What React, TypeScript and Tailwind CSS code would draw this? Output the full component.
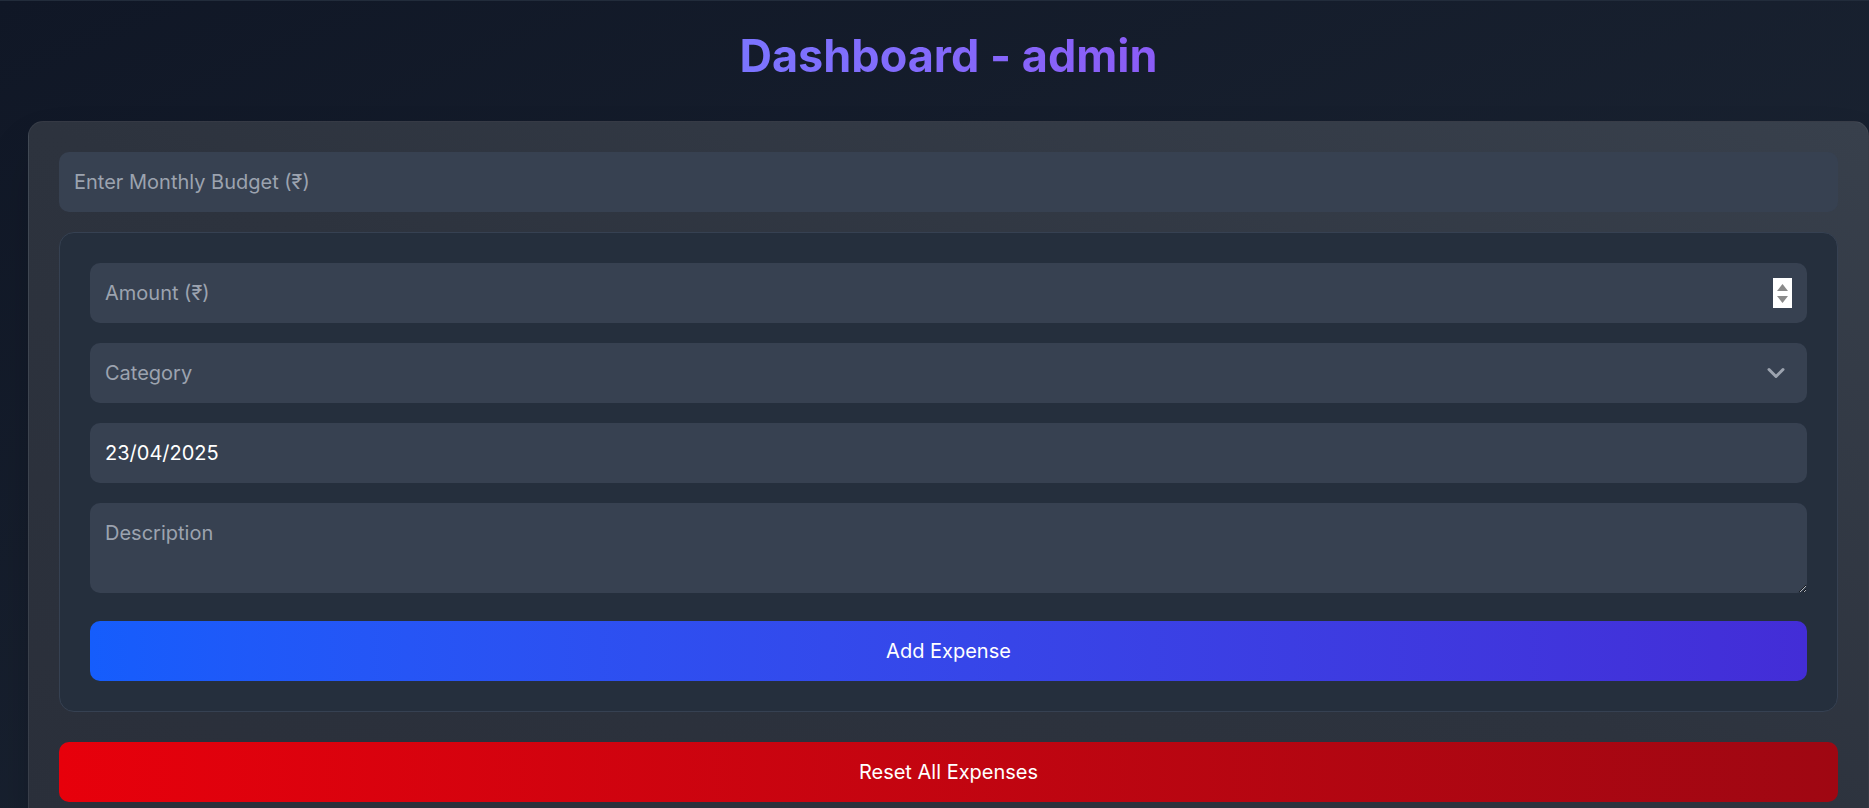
import React, { useState } from 'react';

const inputClass =
  'w-full h-[60px] rounded-[10px] bg-[#374151] px-[15px] text-[20px] placeholder-[#9ca3af] outline-none';

const SpinButton = () => (
  <div className="absolute right-[15px] top-1/2 -translate-y-1/2 flex h-[30px] w-[19px] flex-col items-center justify-center gap-[5px] bg-white">
    <svg width="11" height="7" viewBox="0 0 11 7">
      <path d="M5.5 0 L11 7 L0 7 Z" fill="#8a8a8a" />
    </svg>
    <svg width="11" height="7" viewBox="0 0 11 7">
      <path d="M0 0 L11 0 L5.5 7 Z" fill="#8a8a8a" />
    </svg>
  </div>
);

const Chevron = () => (
  <svg
    className="pointer-events-none absolute right-[22px] top-1/2 -translate-y-1/2"
    width="18"
    height="11"
    viewBox="0 0 18 11"
    fill="none"
  >
    <path d="M2 2 L9 9 L16 2" stroke="#9ca3af" strokeWidth="3" strokeLinecap="round" strokeLinejoin="round" />
  </svg>
);

export default function App() {
  const [budget, setBudget] = useState('');
  const [amount, setAmount] = useState('');
  const [category, setCategory] = useState('');
  const [date, setDate] = useState('23/04/2025');
  const [description, setDescription] = useState('');

  return (
    <div
      className="min-h-screen overflow-hidden border-t border-[#222c3b] bg-gradient-to-br from-[#101726] to-[#1f2937] pt-[30px]"
      style={{ fontFamily: 'Inter, "Noto Sans", sans-serif' }}
    >
      {/* page is a bit wider than the window, like the original */}
      <div className="w-[1897px]">
        <h1 className="mb-[40px] text-center text-[45px] leading-[50px] font-bold">
          <span className="bg-gradient-to-r from-[#7b74ff] to-[#8b5cf6] bg-clip-text text-transparent">
            Dashboard - admin
          </span>
        </h1>

        <div className="mx-[28px] rounded-[15px] border border-white/5 bg-gradient-to-bl from-[#38404c] via-[#2d333e] to-[#2a2f3a] p-[30px] shadow-2xl">
          {/* budget */}
          <input
            type="text"
            value={budget}
            onChange={(e) => setBudget(e.target.value)}
            placeholder="Enter Monthly Budget (₹)"
            className={`${inputClass} text-white`}
          />

          {/* expense form */}
          <form className="mt-[20px] flex flex-col gap-[20px] rounded-[15px] border border-[#364152] bg-[#252f3d] p-[30px]">
            <div className="relative">
              <input
                type="text"
                value={amount}
                onChange={(e) => setAmount(e.target.value)}
                placeholder="Amount (₹)"
                className={`${inputClass} text-white`}
              />
              <SpinButton />
            </div>

            <div className="relative">
              <select
                value={category}
                onChange={(e) => setCategory(e.target.value)}
                className={`${inputClass} appearance-none ${category ? 'text-white' : 'text-[#9ca3af]'}`}
              >
                <option value="">Category</option>
                <option value="food">Food</option>
                <option value="travel">Travel</option>
                <option value="bills">Bills</option>
              </select>
              <Chevron />
            </div>

            <input
              type="text"
              value={date}
              onChange={(e) => setDate(e.target.value)}
              className={`${inputClass} text-white`}
            />

            <textarea
              rows={2}
              value={description}
              onChange={(e) => setDescription(e.target.value)}
              placeholder="Description"
              className="block h-[90px] w-full rounded-[10px] bg-[#374151] px-[15px] py-[15px] text-[20px] leading-[30px] text-white placeholder-[#9ca3af] outline-none"
            />

            <button
              type="button"
              className="mt-[8px] h-[60px] w-full rounded-[10px] bg-gradient-to-r from-[#155dfc] to-[#432dd7] text-[20px] text-white"
            >
              Add Expense
            </button>
          </form>

          <button
            type="button"
            className="mt-[30px] h-[60px] w-full rounded-[10px] bg-gradient-to-r from-[#e7000b] to-[#9f0712] text-[20px] text-white"
          >
            Reset All Expenses
          </button>
        </div>
      </div>
    </div>
  );
}
